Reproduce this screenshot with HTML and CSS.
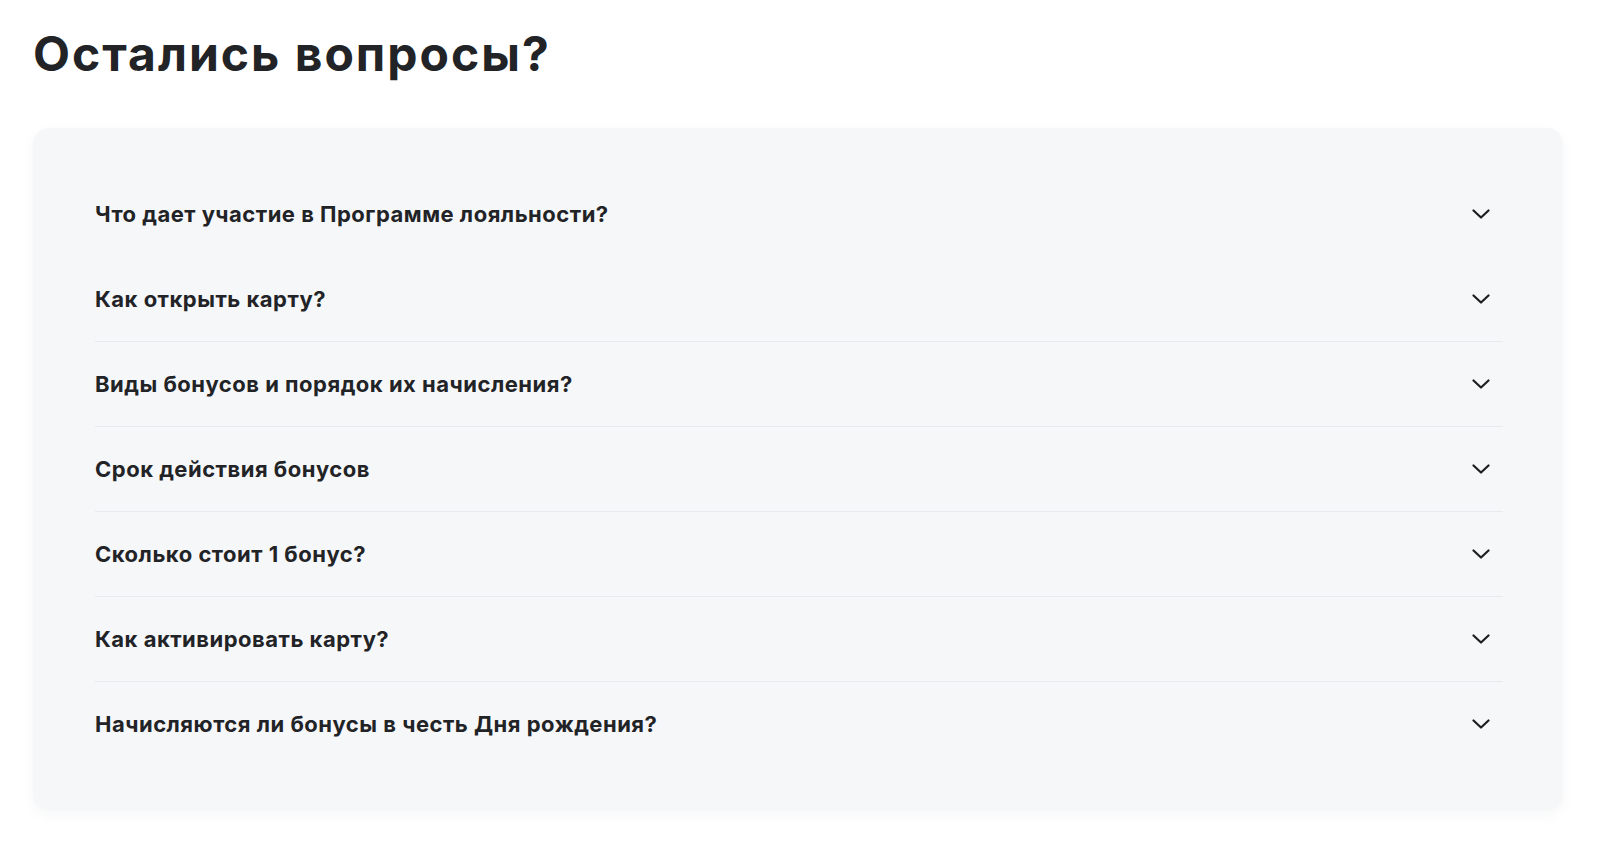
FILE: index.html
```
<html>

<head>
	<meta charset="utf-8">
	<link rel="stylesheet" href="styles.css">
</head>

<body>
	<div class="faq">
		<h1 class="faq-title">Остались вопросы?</h1>

		<!-- list of questions, each row has a chevron on the right -->
		<div class="faq-card">
			<div class="faq-item">
				<span class="faq-question">Что дает участие в Программе лояльности?</span>
				<svg class="faq-arrow" viewBox="0 0 18 10"><path d="M1.5 1.5 L9 8.5 L16.5 1.5" /></svg>
			</div>
			<div class="faq-item">
				<span class="faq-question">Как открыть карту?</span>
				<svg class="faq-arrow" viewBox="0 0 18 10"><path d="M1.5 1.5 L9 8.5 L16.5 1.5" /></svg>
			</div>
			<div class="faq-item">
				<span class="faq-question">Виды бонусов и порядок их начисления?</span>
				<svg class="faq-arrow" viewBox="0 0 18 10"><path d="M1.5 1.5 L9 8.5 L16.5 1.5" /></svg>
			</div>
			<div class="faq-item">
				<span class="faq-question">Срок действия бонусов</span>
				<svg class="faq-arrow" viewBox="0 0 18 10"><path d="M1.5 1.5 L9 8.5 L16.5 1.5" /></svg>
			</div>
			<div class="faq-item">
				<span class="faq-question">Сколько стоит 1 бонус?</span>
				<svg class="faq-arrow" viewBox="0 0 18 10"><path d="M1.5 1.5 L9 8.5 L16.5 1.5" /></svg>
			</div>
			<div class="faq-item">
				<span class="faq-question">Как активировать карту?</span>
				<svg class="faq-arrow" viewBox="0 0 18 10"><path d="M1.5 1.5 L9 8.5 L16.5 1.5" /></svg>
			</div>
			<div class="faq-item">
				<span class="faq-question">Начисляются ли бонусы в честь Дня рождения?</span>
				<svg class="faq-arrow" viewBox="0 0 18 10"><path d="M1.5 1.5 L9 8.5 L16.5 1.5" /></svg>
			</div>
		</div>
	</div>
</body>

</html>
```

FILE: styles.css
```
body {
	margin: 0;
	background: #fff;
	font-family: Inter, "Noto Sans", sans-serif;
	color: #222326;
}

.faq {
	padding: 24px 35px 0 33px;
}

.faq-title {
	margin: 0 0 44px 0;
	font-size: 48px;
	font-weight: 700;
	line-height: 60px;
	letter-spacing: 2px;
}

.faq-card {
	background: #f6f7f9;
	border-radius: 16px;
	padding: 43px 60px 45px 62px;
	box-shadow: 0 4px 14px rgba(30, 40, 60, 0.04);
}

.faq-item {
	display: flex;
	align-items: center;
	justify-content: space-between;
	height: 84px;
	border-top: 1px solid #e9eaed;
}

/* first two rows have no line above */
.faq-item:first-child,
.faq-item:nth-child(2) {
	border-top-color: transparent;
}

.faq-question {
	font-size: 22px;
	font-weight: 700;
	letter-spacing: 0.5px;
}

.faq-arrow {
	width: 18px;
	height: 10px;
	margin-right: 13px;
	fill: none;
	stroke: #1d1e20;
	stroke-width: 2.2;
	stroke-linecap: round;
	stroke-linejoin: round;
}
```
